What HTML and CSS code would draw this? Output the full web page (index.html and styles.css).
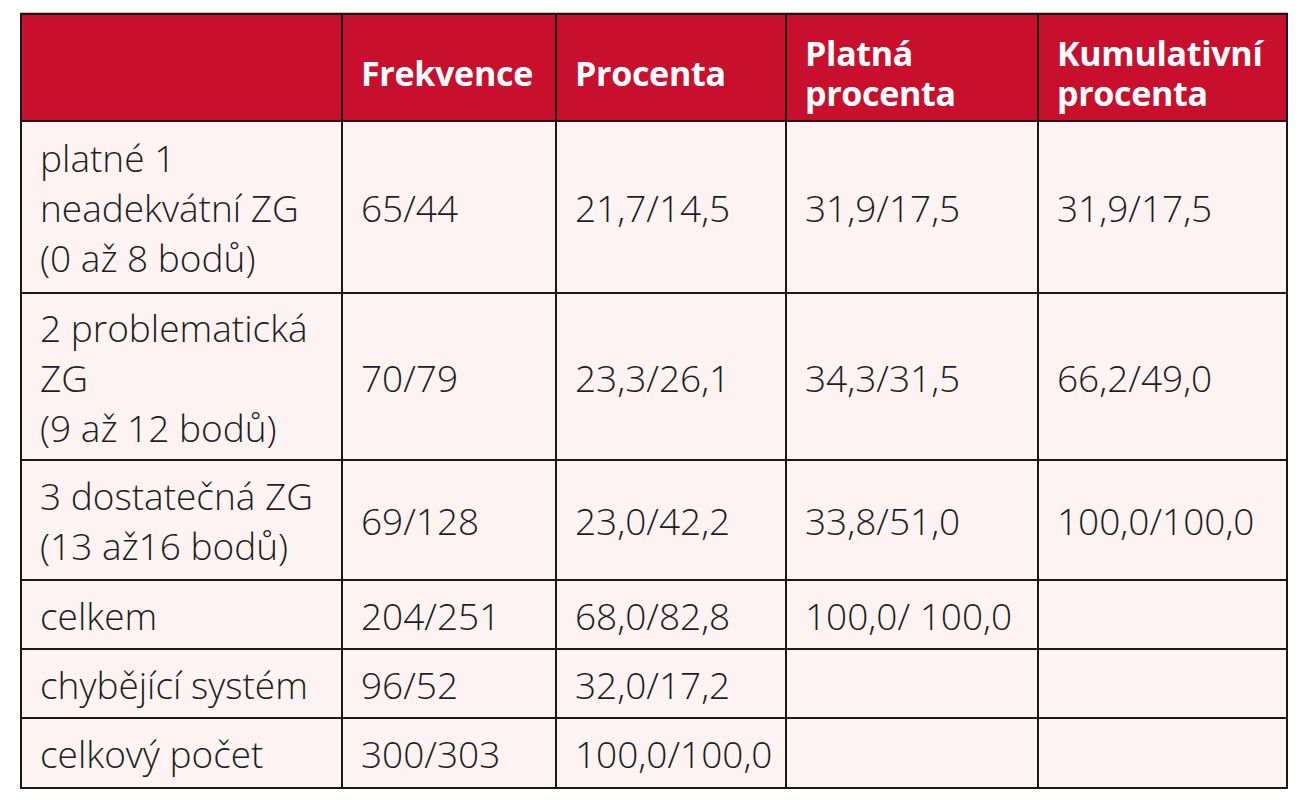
FILE: index.html
```html
<!DOCTYPE html>
<html lang="cs">
<head>
<meta charset="utf-8">
<title>Tabulka</title>
<link rel="stylesheet" href="styles.css">
</head>
<body>
<div class="page">
  <table class="data">
    <colgroup>
      <col class="c1"><col class="c2"><col class="c3"><col class="c4"><col class="c5">
    </colgroup>
    <thead>
      <tr>
        <th></th>
        <th>Frekvence</th>
        <th>Procenta</th>
        <th><span class="hl">Platná</span><span class="hl">procenta</span></th>
        <th><span class="hl">Kumulativní</span><span class="hl">procenta</span></th>
      </tr>
    </thead>
    <tbody>
      <tr class="r1">
        <td>platné 1<br>neadekvátní ZG<br>(0 až 8 bodů)</td>
        <td>65/44</td>
        <td>21,7/14,5</td>
        <td>31,9/17,5</td>
        <td>31,9/17,5</td>
      </tr>
      <tr class="r2">
        <td>2 problematická<br>ZG<br>(9 až 12 bodů)</td>
        <td>70/79</td>
        <td>23,3/26,1</td>
        <td>34,3/31,5</td>
        <td>66,2/49,0</td>
      </tr>
      <tr class="r3">
        <td>3 dostatečná ZG<br>(13 až16 bodů)</td>
        <td>69/128</td>
        <td>23,0/42,2</td>
        <td>33,8/51,0</td>
        <td>100,0/100,0</td>
      </tr>
      <tr class="rs">
        <td>celkem</td>
        <td>204/251</td>
        <td>68,0/82,8</td>
        <td>100,0/ 100,0</td>
        <td></td>
      </tr>
      <tr class="rs">
        <td>chybějící systém</td>
        <td>96/52</td>
        <td>32,0/17,2</td>
        <td></td>
        <td></td>
      </tr>
      <tr class="rs last">
        <td>celkový počet</td>
        <td>300/303</td>
        <td>100,0/100,0</td>
        <td></td>
        <td></td>
      </tr>
    </tbody>
  </table>
</div>
</body>
</html>
```

FILE: styles.css
```css
html, body {
  margin: 0;
  padding: 0;
  background: #ffffff;
}

.page {
  padding: 13px 0 0 20px;
}

.data {
  border-collapse: collapse;
  table-layout: fixed;
  width: 1266px;
  font-family: "Open Sans", "Liberation Sans", sans-serif;
  border: 2px solid #1c1616;
  box-shadow: 0 -1px 0 #b9bcc4;
}

.c1 { width: 321px; }
.c2 { width: 214px; }
.c3 { width: 230px; }
.c4 { width: 252px; }
.c5 { width: 249px; }

.data th,
.data td {
  border: 2px solid #1c1616;
  text-align: left;
  vertical-align: middle;
}

.data th {
  background: #c8102e;
  color: #ffffff;
  font-weight: 700;
  font-size: 34px;
  line-height: 40px;
  height: 107px;
  padding: 10px 10px 0 18px;
  box-sizing: border-box;
  letter-spacing: -0.3px;
  white-space: nowrap;
}

.hl {
  display: block;
  height: 40px;
}

.data td {
  background: #fcf3f2;
  color: #1e1e1e;
  font-weight: 300;
  font-size: 37px;
  line-height: 50px;
  padding: 2px 10px 0 18px;
  box-sizing: border-box;
  white-space: nowrap;
}

.r1 td { height: 172px; }
.r2 td { height: 167px; }
.r3 td { height: 120px; }
.rs td { height: 69px; }
.last td { height: 70px; }
```
